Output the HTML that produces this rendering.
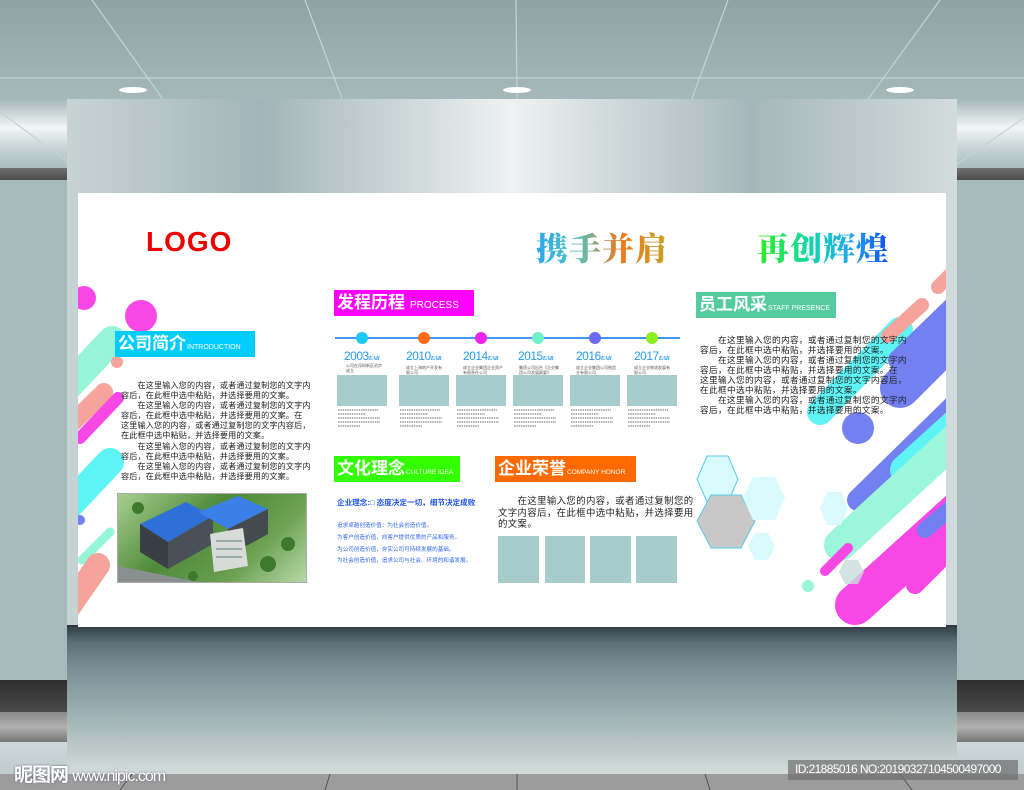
<!DOCTYPE html>
<html><head><meta charset="utf-8">
<style>
*{margin:0;padding:0;box-sizing:border-box}
body{width:1024px;height:790px;overflow:hidden;position:relative;font-family:"Liberation Sans","Noto Sans CJK SC",sans-serif;background:#a6b9bb}
.a{position:absolute}
.t{position:absolute;white-space:nowrap;color:#222;font-family:"Liberation Sans","Noto Sans CJK SC",sans-serif}
.hd{position:absolute;height:26px;color:#fff;font-weight:bold;font-size:17px;line-height:26px;padding-left:3px;white-space:nowrap;overflow:hidden;font-family:"Liberation Sans","Noto Sans CJK SC",sans-serif}
.hd small{font-size:7px;font-weight:normal;margin-left:1px;letter-spacing:0}
.bx{position:absolute;background:#a6cccc}
.yr{position:absolute;color:#2a9af0;font-size:12px;letter-spacing:-0.5px;white-space:nowrap}
.yr i{font-size:6px;font-weight:bold;font-family:"Liberation Serif",serif}
.st{position:absolute;font-size:4px;line-height:5px;color:#555;white-space:nowrap}
</style></head><body>
<div class="a" style="left:0;top:0;width:1024px;height:100px;background:linear-gradient(#8fa3a4,#a5b8ba)"></div>
<div class="a" style="left:0;top:100px;width:1024px;height:70px;background:linear-gradient(#a8babc,#f3f6f6 40%,#c6d3d4 70%,#a9bbbd)"></div>
<div class="a" style="left:0;top:168px;width:1024px;height:12px;background:linear-gradient(#707070,#4a4a4a)"></div>
<div class="a" style="left:0;top:680px;width:1024px;height:32px;background:linear-gradient(#2e2e2e,#4a4a4a)"></div>
<div class="a" style="left:0;top:712px;width:1024px;height:30px;background:linear-gradient(#8a8a8a,#b0b0b0,#777)"></div>
<div class="a" style="left:0;top:742px;width:1024px;height:48px;background:linear-gradient(#cfd8da,#b7c4c6)"></div>
<svg class="a" style="left:0;top:0" width="1024" height="200"><g stroke="#c3d3d3" stroke-width="1.2" fill="none"><line x1="92" y1="0" x2="235" y2="200"/><line x1="305" y1="0" x2="380" y2="200"/><line x1="516" y1="0" x2="518" y2="200"/><line x1="728" y1="0" x2="655" y2="200"/><line x1="940" y1="0" x2="795" y2="200"/><line x1="0" y1="112" x2="120" y2="200"/><line x1="1024" y1="118" x2="905" y2="200"/><line x1="0" y1="78" x2="1024" y2="78"/></g><g fill="#fff"><ellipse cx="133" cy="90" rx="14" ry="3"/><ellipse cx="517" cy="90" rx="14" ry="3"/><ellipse cx="900" cy="90" rx="14" ry="3"/></g></svg>
<div class="a" style="left:0;top:774px;width:1024px;height:16px;background:#9c9c9c"></div>
<div class="a" style="left:67px;top:99px;width:890px;height:675px;background:linear-gradient(90deg,#c8d3d4,#a3b5b8 22%,#eef2f2 50%,#a6b7ba 77%,#d3dcdd);"></div>
<div class="a" style="left:67px;top:625px;width:890px;height:149px;background:linear-gradient(#2f3b42,#5c7078 12%,#7a9096 30%,#9eb1b3 60%,#d4dcda 100%)"></div>
<svg class="a" style="left:0;top:774px" width="1024" height="16"><g stroke="#555" stroke-width="1"><line x1="132" y1="0" x2="120" y2="16"/><line x1="330" y1="0" x2="325" y2="16"/><line x1="517" y1="0" x2="517" y2="16"/><line x1="705" y1="0" x2="710" y2="16"/><line x1="900" y1="0" x2="912" y2="16"/></g></svg>
<div class="a" style="left:78px;top:193px;width:868px;height:434px;background:#fff;overflow:hidden">
<svg class="a" style="left:0;top:0" width="868" height="434" viewBox="78 193 868 434">
<g stroke-linecap="round" fill="none">
<line x1="60" y1="395" x2="112" y2="340" stroke="#96f5d6" stroke-width="28"/>
<line x1="65" y1="430" x2="104" y2="392" stroke="#f6a39c" stroke-width="18"/>
<line x1="80" y1="438" x2="118" y2="398" stroke="#f748e6" stroke-width="12"/>
<line x1="60" y1="515" x2="110" y2="462" stroke="#5ef4f5" stroke-width="28"/>
<line x1="82" y1="560" x2="110" y2="532" stroke="#96f5d6" stroke-width="9"/>
<line x1="60" y1="620" x2="98" y2="565" stroke="#f6a39c" stroke-width="24"/>
<line x1="820" y1="412" x2="900" y2="330" stroke="#5ef4f5" stroke-width="26"/>
<line x1="888" y1="336" x2="922" y2="305" stroke="#f6a39c" stroke-width="14"/>
<line x1="938" y1="287" x2="960" y2="265" stroke="#f6a39c" stroke-width="14"/>
<line x1="900" y1="388" x2="970" y2="318" stroke="#7280f0" stroke-width="40"/>
<line x1="898" y1="360" x2="960" y2="300" stroke="#7280f0" stroke-width="20"/>
<line x1="858" y1="500" x2="960" y2="400" stroke="#7280f0" stroke-width="22"/>
<line x1="905" y1="470" x2="960" y2="420" stroke="#5ef4f5" stroke-width="30"/>
<line x1="840" y1="545" x2="960" y2="435" stroke="#9cf7da" stroke-width="32"/>
<line x1="855" y1="605" x2="960" y2="510" stroke="#f748e6" stroke-width="40"/>
<line x1="915" y1="585" x2="960" y2="540" stroke="#f748e6" stroke-width="18"/>
<line x1="925" y1="530" x2="960" y2="500" stroke="#7280f0" stroke-width="16"/>
<line x1="825" y1="571" x2="848" y2="548" stroke="#f748e6" stroke-width="10"/>
</g>
<circle cx="84" cy="298" r="12" fill="#f748e6"/>
<circle cx="141" cy="316" r="16" fill="#f748e6"/>
<circle cx="117" cy="362" r="6" fill="#f6a39c"/>
<circle cx="80" cy="520" r="5" fill="#7280f0"/>
<circle cx="858" cy="428" r="16" fill="#7280f0"/>
<circle cx="808" cy="586" r="6" fill="#9cf7da"/>
<polygon points="707,456 728,456 738,479 728,502 707,502 697,479" fill="#d9fbfd" stroke="#55ccee" stroke-width="1"/>
<polygon points="711,495 741,495 755,521 741,548 711,548 697,521" fill="#c8c8c8" stroke="#55ccee" stroke-width="1"/>
<polygon points="753,477 775,477 785,498 775,520 753,520 743,498" fill="#d9fbfd"/>
<polygon points="755,533 768,533 775,546 768,560 755,560 748,546" fill="#d9fbfd"/>
<polygon points="827,492 841,492 848,508 841,525 827,525 820,508" fill="#d9fbfd"/>
<polygon points="845,560 858,560 864,572 858,584 845,584 839,572" fill="#c9dcdc" opacity=".8"/>
</svg>
</div>
<div class="t" style="left:146px;top:226px;font-size:28px;font-weight:bold;color:#ee0000;letter-spacing:1px">LOGO</div>
<div class="t" style="left:536px;top:224px;font-size:32px;font-weight:900;font-family:'Noto Serif CJK SC',serif;background:linear-gradient(90deg,#2aa6ee,#4bc4c4 30%,#ef7a20 65%,#c8a020);-webkit-background-clip:text;background-clip:text;color:transparent;letter-spacing:1px">携手并肩</div>
<div class="t" style="left:757px;top:224px;font-size:32px;font-weight:900;font-family:'Noto Serif CJK SC',serif;background:linear-gradient(90deg,#30ee20,#10d8a8 40%,#20a8f0 70%,#1050f0);-webkit-background-clip:text;background-clip:text;color:transparent;letter-spacing:1px">再创辉煌</div>
<div class="hd" style="left:115px;top:331px;width:140px;background:#00ccff">公司简介<small>INTRODUCTION</small></div>
<div class="hd" style="left:334px;top:290px;width:140px;background:#ff00ff">发程历程<small style="font-size:10px;margin-left:5px">PROCESS</small></div>
<div class="hd" style="left:696px;top:292px;width:140px;background:#55cca0">员工风采<small>STAFF PRESENCE</small></div>
<div class="hd" style="left:334px;top:456px;width:126px;background:#33ff00">文化理念<small style="font-size:6.5px">CULTURE IDEA</small></div>
<div class="hd" style="left:495px;top:456px;width:141px;background:#ff6a00">企业荣誉<small style="font-size:6.5px">COMPANY HONOR</small></div>
<div class="t" style="left:121px;top:381px;font-size:8.1px;line-height:10.1px;letter-spacing:0.15px">　　在这里输入您的内容，或者通过复制您的文字内<br>容后，在此框中选中粘贴，并选择要用的文案。<br>　　在这里输入您的内容，或者通过复制您的文字内<br>容后，在此框中选中粘贴，并选择要用的文案。在<br>这里输入您的内容，或者通过复制您的文字内容后，<br>在此框中选中粘贴，并选择要用的文案。<br>　　在这里输入您的内容，或者通过复制您的文字内<br>容后，在此框中选中粘贴，并选择要用的文案。<br>　　在这里输入您的内容，或者通过复制您的文字内<br>容后，在此框中选中粘贴，并选择要用的文案。</div>
<div class="a" style="left:117px;top:493px;width:190px;height:90px;border:1px solid #aaa;overflow:hidden;background:linear-gradient(135deg,#a8cf90,#4f8a3a 40%,#6aa050 70%,#b8d8a8)">
<svg width="190" height="90"><polygon points="22,30 68,8 95,22 50,48" fill="#2f6fd8"/><polygon points="22,30 50,48 50,75 22,58" fill="#3a3f45"/><polygon points="50,48 95,22 95,50 50,75" fill="#4a5058"/><polygon points="80,18 120,2 150,15 110,35" fill="#3a80e8"/><polygon points="110,35 150,15 150,40 110,62" fill="#444a50"/><polygon points="92,40 125,34 130,72 96,78" fill="#d8dcd8"/><g fill="#9aa"><rect x="98" y="46" width="26" height="2"/><rect x="98" y="54" width="26" height="2"/><rect x="98" y="62" width="26" height="2"/></g><polygon points="0,72 80,88 0,90" fill="#8a9090"/><g fill="#3e7a2e"><circle cx="20" cy="14" r="6"/><circle cx="150" cy="70" r="8"/><circle cx="170" cy="50" r="7"/><circle cx="75" cy="82" r="5"/></g></svg></div>
<div class="a" style="left:335px;top:337px;width:345px;height:2px;background:#3a9af0"></div>
<div class="a" style="left:356px;top:332px;width:12px;height:12px;border-radius:50%;background:#1ec8f5"></div>
<div class="a" style="left:418px;top:332px;width:12px;height:12px;border-radius:50%;background:#ff6a13"></div>
<div class="a" style="left:475px;top:332px;width:12px;height:12px;border-radius:50%;background:#ee22ee"></div>
<div class="a" style="left:532px;top:332px;width:12px;height:12px;border-radius:50%;background:#6ff0c8"></div>
<div class="a" style="left:589px;top:332px;width:12px;height:12px;border-radius:50%;background:#6a6af0"></div>
<div class="a" style="left:646px;top:332px;width:12px;height:12px;border-radius:50%;background:#8cf020"></div>
<div class="yr" style="left:344px;top:349px">2003<i>EAR</i></div>
<div class="yr" style="left:406px;top:349px">2010<i>EAR</i></div>
<div class="yr" style="left:463px;top:349px">2014<i>EAR</i></div>
<div class="yr" style="left:518px;top:349px">2015<i>EAR</i></div>
<div class="yr" style="left:576px;top:349px">2016<i>EAR</i></div>
<div class="yr" style="left:634px;top:349px">2017<i>EAR</i></div>
<div class="st" style="left:346px;top:363px">公司在深圳新区初步<br>成立</div>
<div class="st" style="left:406px;top:365px">成立上海地产开发有<br>限公司</div>
<div class="st" style="left:463px;top:365px">成立企业集团企业资产<br>有限责任公司</div>
<div class="st" style="left:519px;top:365px">集团公司出台《企业集<br>团公司发展纲要》</div>
<div class="st" style="left:576px;top:365px">成立企业集团公司制造<br>业有限公司</div>
<div class="st" style="left:634px;top:365px">成立企业物流发展有<br>限公司</div>
<div class="bx" style="left:337px;top:375px;width:50px;height:31px"></div>
<div class="bx" style="left:399px;top:375px;width:50px;height:31px"></div>
<div class="bx" style="left:456px;top:375px;width:50px;height:31px"></div>
<div class="bx" style="left:513px;top:375px;width:50px;height:31px"></div>
<div class="bx" style="left:570px;top:375px;width:50px;height:31px"></div>
<div class="bx" style="left:627px;top:375px;width:50px;height:31px"></div>
<svg class="a" style="left:336px;top:409px" width="345" height="30"><g stroke="#999" stroke-width="1.5" stroke-dasharray="1.5 .8"><line x1="2" y1="1" x2="42" y2="1"/><line x1="2" y1="5" x2="30" y2="5"/><line x1="2" y1="9" x2="44" y2="9"/><line x1="2" y1="13" x2="44" y2="13"/><line x1="2" y1="17" x2="24" y2="17"/>
<line x1="64" y1="1" x2="104" y2="1"/><line x1="64" y1="5" x2="92" y2="5"/><line x1="64" y1="9" x2="106" y2="9"/><line x1="64" y1="13" x2="106" y2="13"/><line x1="64" y1="17" x2="86" y2="17"/>
<line x1="121" y1="1" x2="161" y2="1"/><line x1="121" y1="5" x2="149" y2="5"/><line x1="121" y1="9" x2="163" y2="9"/><line x1="121" y1="13" x2="163" y2="13"/><line x1="121" y1="17" x2="143" y2="17"/>
<line x1="178" y1="1" x2="218" y2="1"/><line x1="178" y1="5" x2="206" y2="5"/><line x1="178" y1="9" x2="220" y2="9"/><line x1="178" y1="13" x2="220" y2="13"/><line x1="178" y1="17" x2="200" y2="17"/>
<line x1="235" y1="1" x2="275" y2="1"/><line x1="235" y1="5" x2="263" y2="5"/><line x1="235" y1="9" x2="277" y2="9"/><line x1="235" y1="13" x2="277" y2="13"/><line x1="235" y1="17" x2="257" y2="17"/>
<line x1="292" y1="1" x2="332" y2="1"/><line x1="292" y1="5" x2="320" y2="5"/><line x1="292" y1="9" x2="334" y2="9"/><line x1="292" y1="13" x2="334" y2="13"/><line x1="292" y1="17" x2="314" y2="17"/></g></svg>
<div class="t" style="left:700px;top:335px;font-size:8.6px;line-height:10px;letter-spacing:0.4px">　　在这里输入您的内容，或者通过复制您的文字内<br>容后，在此框中选中粘贴，并选择要用的文案。<br>　　在这里输入您的内容，或者通过复制您的文字内<br>容后，在此框中选中粘贴，并选择要用的文案。在<br>这里输入您的内容，或者通过复制您的文字内容后，<br>在此框中选中粘贴，并选择要用的文案。<br>　　在这里输入您的内容，或者通过复制您的文字内<br>容后，在此框中选中粘贴，并选择要用的文案。</div>
<div class="t" style="left:337px;top:497px;font-size:7.6px;font-weight:bold;color:#2255ee">企业理念:□ 态度决定一切，细节决定成败</div>
<div class="t" style="left:337px;top:521px;font-size:5.6px;line-height:11.8px;color:#3366ee">追求卓越创造价值：为社会创造价值。<br>为客户创造价值，向客户提供优质的产品和服务。<br>为公司创造价值，夯实公司可持续发展的基础。<br>为社会创造价值，追求公司与社会、环境的和谐发展。</div>
<div class="t" style="left:498px;top:495px;font-size:9.4px;line-height:11.5px;letter-spacing:0.4px">　　在这里输入您的内容，或者通过复制您的<br>文字内容后，在此框中选中粘贴，并选择要用<br>的文案。</div>
<div class="bx" style="left:498px;top:536px;width:41px;height:47px"></div>
<div class="bx" style="left:545px;top:536px;width:40px;height:47px"></div>
<div class="bx" style="left:590px;top:536px;width:41px;height:47px"></div>
<div class="bx" style="left:636px;top:536px;width:41px;height:47px"></div>
<div class="t" style="left:14px;top:760px;font-size:19px;color:#fff;font-weight:bold;letter-spacing:-1px;text-shadow:0 0 2px #667">昵图网 <span style="font-size:16px;font-weight:normal">www.nipic.com</span></div>
<div class="a" style="left:788px;top:760px;width:230px;height:20px;background:rgba(110,110,110,.7)"></div>
<div class="t" style="left:795px;top:762px;font-size:12px;color:#fff;letter-spacing:-0.6px">ID:21885016 NO:20190327104500497000</div>
</body></html>
